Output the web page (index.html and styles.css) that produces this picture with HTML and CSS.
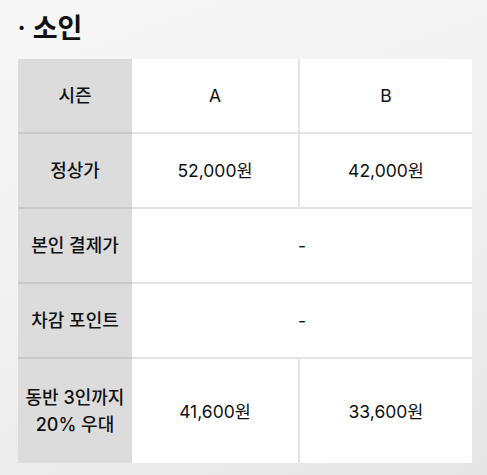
FILE: index.html
```html
<!DOCTYPE html>
<html lang="ko">
<head>
<meta charset="utf-8">
<link rel="stylesheet" href="styles.css">
</head>
<body>
<div class="page">
  <h2 class="title"><span class="dot">·</span> 소인</h2>
  <table class="price">
    <colgroup>
      <col class="c-head">
      <col class="c-a">
      <col class="c-b">
    </colgroup>
    <tr>
      <th>시즌</th>
      <td>A</td>
      <td>B</td>
    </tr>
    <tr>
      <th>정상가</th>
      <td>52,000원</td>
      <td>42,000원</td>
    </tr>
    <tr>
      <th>본인 결제가</th>
      <td colspan="2">-</td>
    </tr>
    <tr>
      <th>차감 포인트</th>
      <td colspan="2">-</td>
    </tr>
    <tr class="last">
      <th>동반 3인까지<br>20% 우대</th>
      <td>41,600원</td>
      <td>33,600원</td>
    </tr>
  </table>
</div>
</body>
</html>
```

FILE: styles.css
```css
html, body {
  margin: 0;
  padding: 0;
  height: 100%;
}
body {
  background: linear-gradient(160deg, #f7f7f7 0%, #f1f1f1 50%, #e6e6e6 100%);
  font-family: Inter, "Noto Sans CJK KR", sans-serif;
  color: #111;
}
.page {
  padding: 6px 15px 0 18px;
}
.title {
  margin: 0 0 12px 0;
  font-family: "Noto Sans CJK KR", sans-serif;
  font-size: 27px;
  line-height: 40px;
  font-weight: 700;
  color: #111;
}
.title .dot {
  font-weight: 700;
  font-size: 22px;
  vertical-align: 2px;
}
.price {
  width: 454px;
  border-collapse: collapse;
  table-layout: fixed;
  background: #fff;
}
.c-head { width: 114px; }
.c-a { width: 167px; }
.c-b { width: 173px; }
.price th, .price td {
  height: 73px;
  padding: 0;
  text-align: center;
  vertical-align: middle;
  font-size: 17.5px;
  line-height: 27px;
  font-weight: 400;
  color: #111;
  border-bottom: 2px solid #e4e4e4;
}
.price th {
  background: #dcdcdc;
  border-bottom-color: #c9c9c9;
  font-size: 18px;
  font-weight: 500;
}
.price td + td {
  border-left: 2px solid #e4e4e4;
}
.price td.dash {
  padding-right: 4px;
}
.price tr.last th, .price tr.last td {
  height: 104px;
  border-bottom: none;
}
```
